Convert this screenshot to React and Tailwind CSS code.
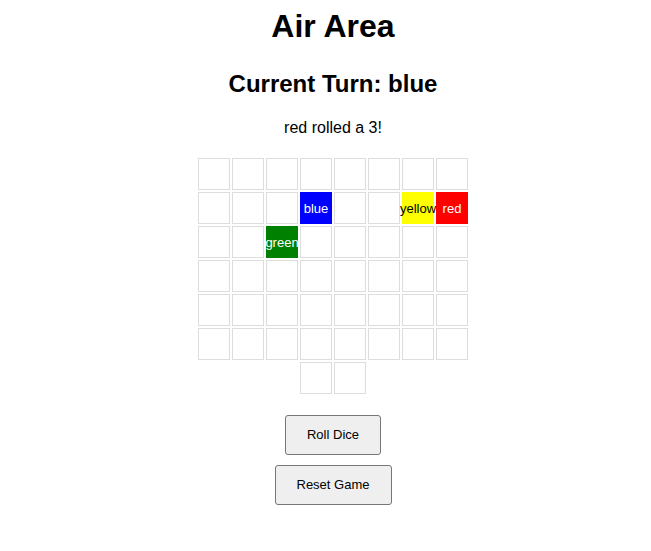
import React from "react";

const COLORS = {
  "1-3": { label: "blue", cls: "bg-[#0000ff] border-[#0000ff] text-white" },
  "1-6": { label: "yellow", cls: "bg-[#ffff00] border-[#ffff00] text-black" },
  "1-7": { label: "red", cls: "bg-[#ff0000] border-[#ff0000] text-white" },
  "2-2": { label: "green", cls: "bg-[#008000] border-[#008000] text-white" },
};

function Cell({ piece }) {
  return (
    <div
      className={
        "w-8 h-8 border flex items-center justify-center text-[13px] leading-[15px] whitespace-nowrap " +
        (piece ? piece.cls : "border-[#dddddd] bg-white")
      }
    >
      {piece ? piece.label : null}
    </div>
  );
}

export default function App() {
  const rows = [0, 1, 2, 3, 4, 5];
  const cols = [0, 1, 2, 3, 4, 5, 6, 7];
  return (
    <div
      className="pl-[15px] text-center text-black bg-white min-h-[551px]"
      style={{ fontFamily: '"Liberation Sans", Arial, sans-serif' }}
    >
      <h1 className="text-[32px] font-bold leading-[37px] pt-[8px]">Air Area</h1>
      <h2 className="text-[24px] font-bold leading-[28px] mt-[25px]">Current Turn: blue</h2>
      <p className="text-[16px] leading-[18px] mt-[21px]">red rolled a 3!</p>
      <div className="mt-[21px] flex flex-col items-center gap-[2px]">
        {rows.map((r) => (
          <div key={r} className="flex gap-[2px]">
            {cols.map((c) => (
              <Cell key={c} piece={COLORS[`${r}-${c}`]} />
            ))}
          </div>
        ))}
        <div className="flex gap-[2px]">
          <Cell />
          <Cell />
        </div>
      </div>
      <div className="mt-[21px] flex flex-col items-center gap-[10px]">
        <button className="h-10 w-[96px] text-[13px] bg-[#efefef] border border-[#767676] rounded-[3px] text-black">
          Roll Dice
        </button>
        <button className="h-10 w-[117px] text-[13px] bg-[#efefef] border border-[#767676] rounded-[3px] text-black">
          Reset Game
        </button>
      </div>
    </div>
  );
}
